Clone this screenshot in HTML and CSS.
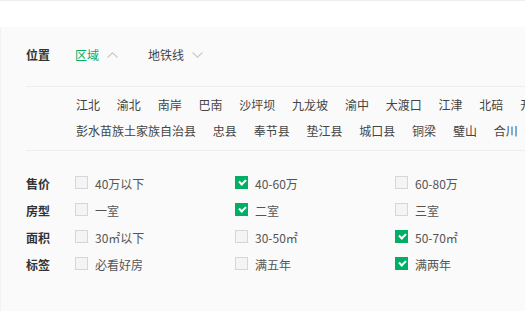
FILE: index.html
```html
<!DOCTYPE html>
<html lang="zh-CN">
<head>
  <meta charset="UTF-8" />
  <title>筛选</title>
  <link rel="stylesheet" href="styles.css">
</head>
<body>
  <div class="topbar"></div>
  <div class="filter">
    <div class="pos-row">
      <span class="label">位置</span>
      <span class="tab active">区域
        <svg class="arrow" width="11" height="6" viewBox="0 0 11 6"><polyline points="0.5,5.5 5.5,0.8 10.5,5.5" fill="none" stroke="#ccc" stroke-width="1.3"/></svg>
      </span>
      <span class="tab">地铁线
        <svg class="arrow" width="11" height="6" viewBox="0 0 11 6"><polyline points="0.5,0.5 5.5,5.2 10.5,0.5" fill="none" stroke="#ccc" stroke-width="1.3"/></svg>
      </span>
    </div>

    <div class="districts">
      <div class="d-row">
        <a>江北</a><a>渝北</a><a>南岸</a><a>巴南</a><a>沙坪坝</a><a>九龙坡</a><a>渝中</a><a>大渡口</a><a>江津</a><a>北碚</a><a>开州</a>
      </div>
      <div class="d-row">
        <a>彭水苗族土家族自治县</a><a>忠县</a><a>奉节县</a><a>垫江县</a><a>城口县</a><a>铜梁</a><a>璧山</a><a>合川</a>
      </div>
    </div>

    <div class="options">
      <div class="opt-row">
        <span class="label">售价</span>
        <label class="opt"><i class="box"></i>40万以下</label>
        <label class="opt"><i class="box checked"></i>40-60万</label>
        <label class="opt"><i class="box"></i>60-80万</label>
      </div>
      <div class="opt-row">
        <span class="label">房型</span>
        <label class="opt"><i class="box"></i>一室</label>
        <label class="opt"><i class="box checked"></i>二室</label>
        <label class="opt"><i class="box"></i>三室</label>
      </div>
      <div class="opt-row">
        <span class="label">面积</span>
        <label class="opt"><i class="box"></i>30㎡以下</label>
        <label class="opt"><i class="box"></i>30-50㎡</label>
        <label class="opt"><i class="box checked"></i>50-70㎡</label>
      </div>
      <div class="opt-row">
        <span class="label">标签</span>
        <label class="opt"><i class="box"></i>必看好房</label>
        <label class="opt"><i class="box"></i>满五年</label>
        <label class="opt"><i class="box checked"></i>满两年</label>
      </div>
    </div>
  </div>
</body>
</html>
```

FILE: styles.css
```css
body {
  margin: 0;
  padding: 0;
  background: #fff;
  font-family: "Noto Sans CJK SC", "Noto Sans", sans-serif;
  font-size: 12px;
  color: #333;
  height: 311px;
  overflow: hidden;
}
.topbar {
  height: 26px;
  border-top: 1px solid #eee;
  background: #fff;
}
.filter {
  background: #fafafa;
  border-left: 1px solid #f2f2f2;
  padding-left: 25px;
  height: 284px;
  overflow: hidden;
}
.label {
  width: 49px;
  flex-shrink: 0;
  font-weight: bold;
  color: #333;
}
.pos-row {
  display: flex;
  align-items: center;
  line-height: 16px;
  padding: 20px 0 23px;
  border-bottom: 1px solid #eee;
}
.tab {
  display: flex;
  align-items: center;
  color: #444;
  margin-right: 30px;
}
.tab.active {
  color: #00ae66;
}
.tab .arrow {
  margin-left: 8px;
}
.districts {
  padding: 5px 0 6px 50px;
  border-bottom: 1px solid #eee;
}
.d-row {
  display: flex;
  white-space: nowrap;
  line-height: 26px;
}
.d-row a {
  margin-right: 16.8px;
  color: #444;
  flex-shrink: 0;
}
.options {
  padding-top: 19px;
}
.opt-row {
  display: flex;
  align-items: center;
  height: 27px;
}
.opt {
  width: 160px;
  flex-shrink: 0;
  display: flex;
  align-items: center;
  color: #555;
}
.box {
  flex-shrink: 0;
  width: 13px;
  height: 13px;
  box-sizing: border-box;
  border: 1px solid #d3d6da;
  background: #f4f4f4;
  margin-right: 7px;
  position: relative;
  top: -1px;
}
.box.checked {
  background: #00ae66;
  border-color: #00ae66;
}
.box.checked::after {
  content: "";
  position: absolute;
  left: 2.5px;
  top: 1.5px;
  width: 5px;
  height: 3px;
  border-left: 2px solid #fff;
  border-bottom: 2px solid #fff;
  transform: rotate(-45deg);
}
```
